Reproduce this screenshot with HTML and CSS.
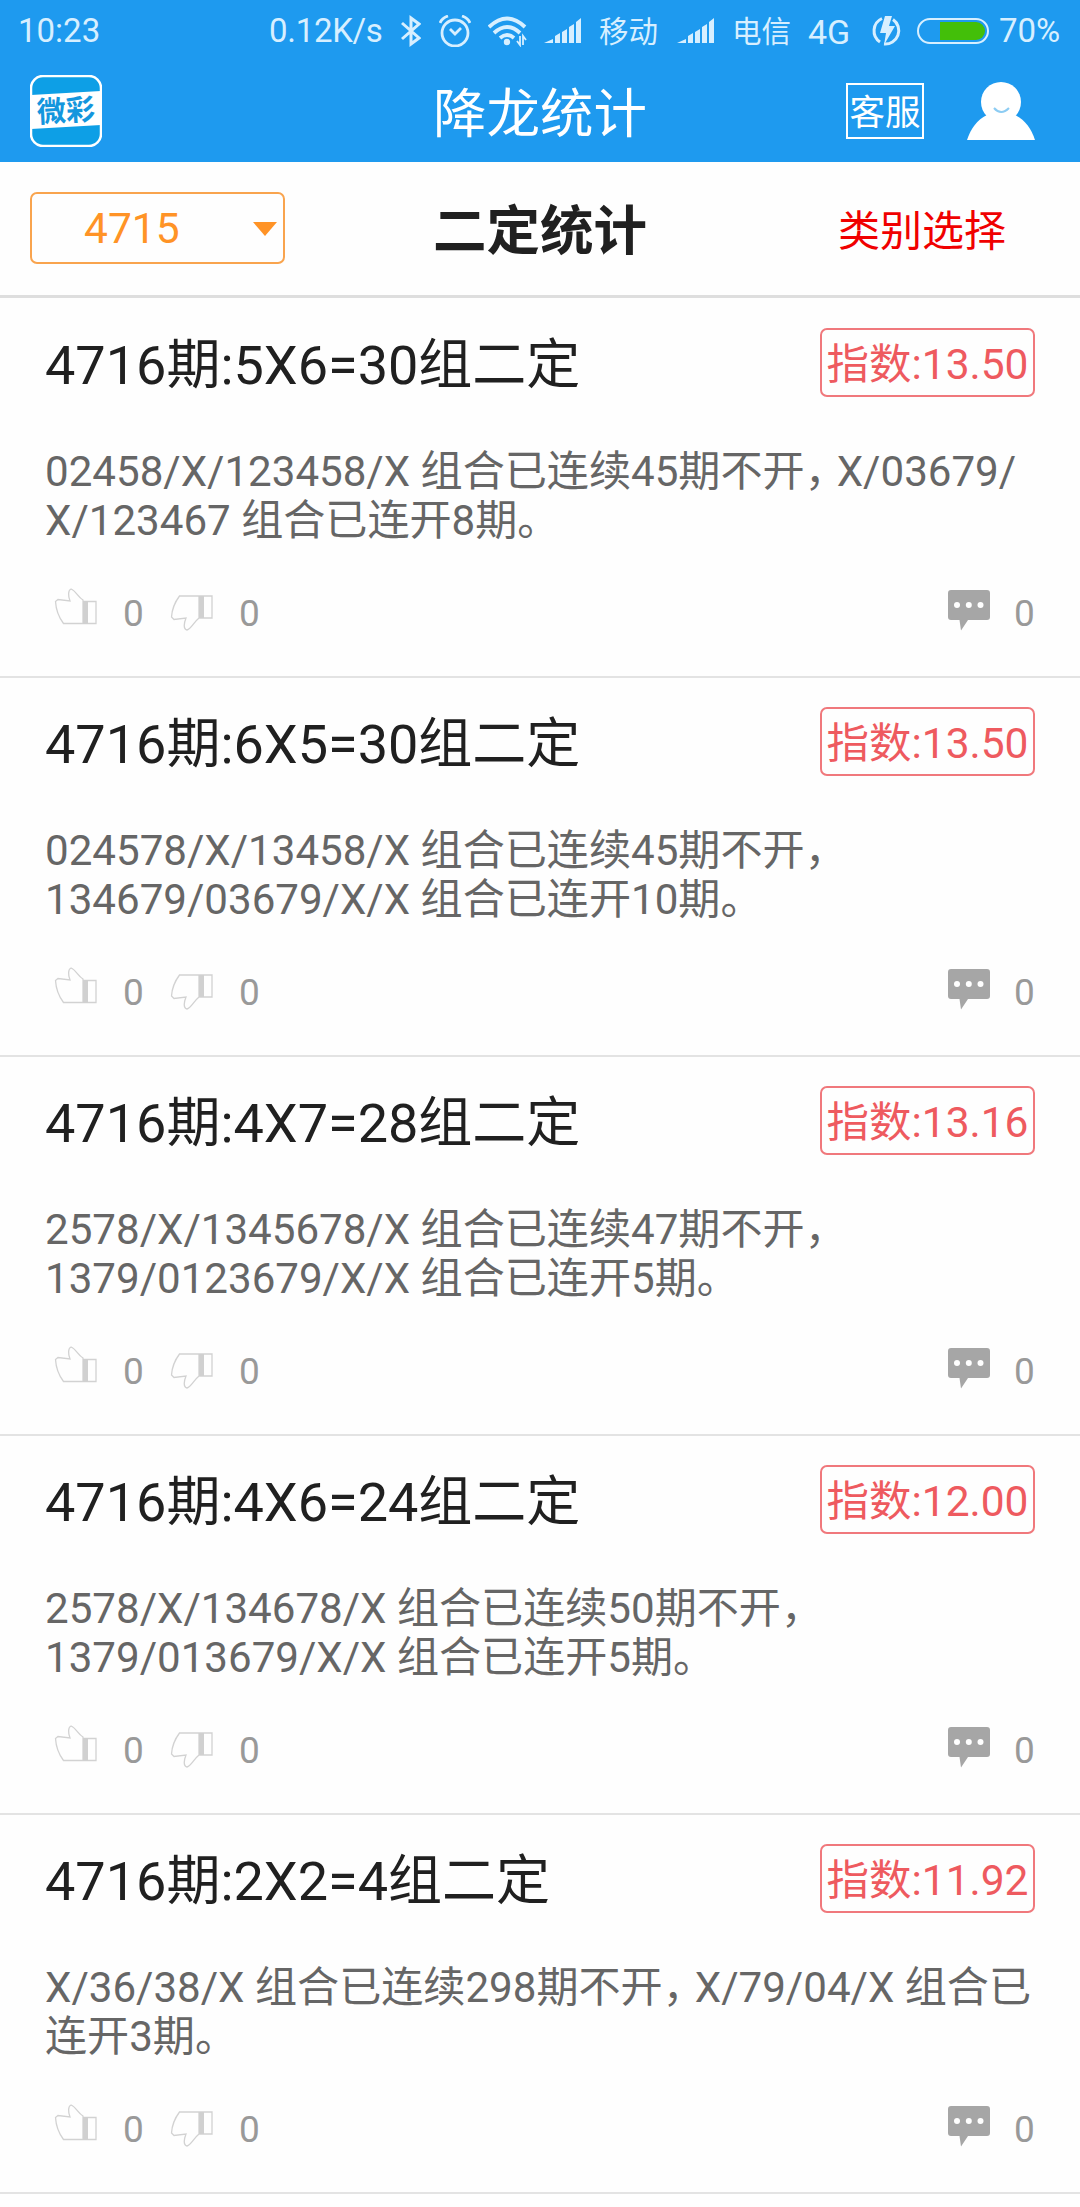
FILE: index.html
```html
<!DOCTYPE html>
<html lang="zh-CN">
<head>
<meta charset="utf-8">
<title>降龙统计</title>
<link rel="stylesheet" href="styles.css">
</head>
<body>
<svg class="defs" width="0" height="0">
  <symbol id="thumb-up" viewBox="0 0 44 38"><path d="M29 13.500H42V35.500H9.500C5 29.500 2 22 1.500 13.500L4 11.500L16 13C14 8 14 2 17 1C22 3 24 9 29 12V35.500" fill="none" stroke="#d2d2d2" stroke-width="1.300"/><path d="M29 13h5v23h-5z" fill="#d0d0d0"/></symbol>
  <symbol id="thumb-down" viewBox="0 0 44 38"><path d="M29 2H42V24H29C24 28 21 35 17 36C13 35 14 29 16 24L4 25.500L1.500 23C2 15 5 8 9.500 2H29V24" fill="none" stroke="#d2d2d2" stroke-width="1.300"/><path d="M29 2h5v22h-5z" fill="#d0d0d0"/></symbol>
  <symbol id="comment" viewBox="0 0 42 41"><path d="M3 0H39Q42 0 42 3V27Q42 30 39 30H20L13 40.500L11.500 30H3Q0 30 0 27V3Q0 0 3 0Z" fill="#a6a6a6"/><circle cx="9" cy="15" r="3" fill="#fff"/><circle cx="20.800" cy="15" r="3" fill="#fff"/><circle cx="32.500" cy="15" r="3" fill="#fff"/></symbol>
  <symbol id="signal" viewBox="0 0 38 26"><path d="M0 25L9 21V25ZM11 18L16 15V25H11ZM18 14L23 11V25H18ZM25 9L30 6V25H25ZM32 4L37 0V25H32Z" fill="#d7efff"/></symbol>
</svg>
<header class="top">
  <div class="status">
    <span class="time">10:23</span>
    <span class="speed">0.12K/s</span>
    <svg class="bt" viewBox="0 0 20 32"><path d="M1 8L18 23L10 29V3L18 9L1 24" fill="none" stroke="#d7efff" stroke-width="3"/></svg>
    <svg class="alarm" viewBox="0 0 32 32"><g fill="none" stroke="#d7efff" stroke-width="2.800"><circle cx="16" cy="18" r="13"/><path d="M11 14L16 19L22 13M1 8Q3 3 9 1M31 8Q29 3 23 1"/></g></svg>
    <svg class="wifi" viewBox="0 0 40 32"><g fill="none" stroke="#d7efff" stroke-width="3.800"><path d="M1 12Q19 -5 37 12M6 18Q19 6 32 18M12 23Q19 17 26 23"/></g><circle cx="19" cy="27" r="3.200" fill="#d7efff"/><path d="M32 21V30L29 26M35 30V21L38 25" fill="none" stroke="#d7efff" stroke-width="1.800"/></svg>
    <svg class="sig sig-a"><use href="#signal"/></svg>
    <span class="carrier-a">移动</span>
    <svg class="sig sig-b"><use href="#signal"/></svg>
    <span class="carrier-b">电信</span>
    <span class="net">4G</span>
    <svg class="charge" viewBox="0 0 32 32"><path d="M11 3.500A13.500 13.500 0 0 0 9 27M22 4.500A13.500 13.500 0 0 1 13 29" fill="none" stroke="#d7efff" stroke-width="3"/><path d="M14 1H21L18 11H24L13 30L15 18H9Z" fill="#d7efff"/></svg>
    <span class="battery"><i></i></span>
    <span class="pct">70%</span>
  </div>
  <div class="nav">
    <div class="logo"><svg viewBox="0 0 72 72"><rect x="1" y="1" width="70" height="70" rx="12" fill="#0d9fe6" stroke="#fff" stroke-width="2.500"/><path d="M1 20L71 16V50L1 54Z" fill="#fff"/><text x="36" y="46" text-anchor="middle" transform="rotate(-3 36 36)" class="logo-text">微彩</text></svg></div>
    <h1>降龙统计</h1>
    <span class="service">客服</span>
    <svg class="user" viewBox="0 0 68 58"><circle cx="34" cy="20" r="20" fill="#fff"/><path d="M0 58C4 46 10 38 20 33H48C58 38 64 46 68 58Z" fill="#fff"/><path d="M27 26Q34 34 42 26" fill="none" stroke="#8cccf3" stroke-width="2"/></svg>
  </div>
</header>
<div class="filter">
  <div class="select"><span>4715</span><i></i></div>
  <h2>二定统计</h2>
  <a class="category">类别选择</a>
</div>
<main>
  <article class="card">
    <div class="head"><h3>4716期:5X6=30组二定</h3><span class="index">指数:13.50</span></div>
    <p>02458/X/123458/X 组合已连续45期不开<span class="comma">，</span>X/03679/<br>X/123467 组合已连开8期。</p>
    <div class="actions"><svg class="up"><use href="#thumb-up"/></svg><b>0</b><svg class="down"><use href="#thumb-down"/></svg><b>0</b><svg class="cmt"><use href="#comment"/></svg><b>0</b></div>
  </article>
  <article class="card">
    <div class="head"><h3>4716期:6X5=30组二定</h3><span class="index">指数:13.50</span></div>
    <p>024578/X/13458/X 组合已连续45期不开<span class="comma">，</span><br>134679/03679/X/X 组合已连开10期。</p>
    <div class="actions"><svg class="up"><use href="#thumb-up"/></svg><b>0</b><svg class="down"><use href="#thumb-down"/></svg><b>0</b><svg class="cmt"><use href="#comment"/></svg><b>0</b></div>
  </article>
  <article class="card">
    <div class="head"><h3>4716期:4X7=28组二定</h3><span class="index">指数:13.16</span></div>
    <p>2578/X/1345678/X 组合已连续47期不开<span class="comma">，</span><br>1379/0123679/X/X 组合已连开5期。</p>
    <div class="actions"><svg class="up"><use href="#thumb-up"/></svg><b>0</b><svg class="down"><use href="#thumb-down"/></svg><b>0</b><svg class="cmt"><use href="#comment"/></svg><b>0</b></div>
  </article>
  <article class="card">
    <div class="head"><h3>4716期:4X6=24组二定</h3><span class="index">指数:12.00</span></div>
    <p>2578/X/134678/X 组合已连续50期不开<span class="comma">，</span><br>1379/013679/X/X 组合已连开5期。</p>
    <div class="actions"><svg class="up"><use href="#thumb-up"/></svg><b>0</b><svg class="down"><use href="#thumb-down"/></svg><b>0</b><svg class="cmt"><use href="#comment"/></svg><b>0</b></div>
  </article>
  <article class="card">
    <div class="head"><h3>4716期:2X2=4组二定</h3><span class="index">指数:11.92</span></div>
    <p>X/36/38/X 组合已连续298期不开<span class="comma">，</span>X/79/04/X 组合已<br>连开3期。</p>
    <div class="actions"><svg class="up"><use href="#thumb-up"/></svg><b>0</b><svg class="down"><use href="#thumb-down"/></svg><b>0</b><svg class="cmt"><use href="#comment"/></svg><b>0</b></div>
  </article>
</main>
</body>
</html>
```
FILE: styles.css
```css
* { box-sizing: border-box; margin: 0; padding: 0; }
body { width: 1080px; height: 2207px; overflow: hidden; background: #fefefe; font-family: Roboto, "Noto Sans CJK SC", sans-serif; color: #202020; }
svg { display: block; flex: none; }
span, b, a, h1, h2, h3 { white-space: nowrap; flex: none; }
.defs { position: absolute; }
.top { height: 162px; background: #1e9aef; color: #fff; }
.status { height: 62px; display: flex; align-items: center; padding-left: 18px; font-size: 33px; line-height: 62px; color: #d7efff; }
.time { width: 251px; }
.speed { width: 132px; letter-spacing: -0.3px; }
.bt { width: 20px; height: 32px; }
.alarm { width: 32px; height: 32px; margin-left: 18px; }
.wifi { width: 40px; height: 32px; margin-left: 17px; }
.sig { width: 38px; height: 26px; }
.sig-a { margin-left: 16px; }
.carrier-a, .carrier-b { font-size: 29.500px; width: 59px; padding-top: 2px; }
.carrier-a { margin-left: 17px; }
.sig-b { margin-left: 19px; }
.carrier-b { margin-left: 17px; }
.net { margin-left: 17px; width: 45px; padding-top: 1px; font-size: 34px; }
.charge { width: 32px; height: 32px; margin-left: 18px; }
.battery { width: 72px; height: 26px; border: 2px solid #d7efff; border-radius: 13px; margin-left: 14px; padding: 2px; display: flex; justify-content: flex-end; }
.battery i { width: 45px; background: #43bf09; border-radius: 0 9px 9px 0; }
.pct { margin-left: 10px; }
.nav { height: 100px; display: flex; align-items: center; padding-left: 30px; }
.logo { width: 72px; height: 72px; margin-top: -2px; }
.logo-text { font-size: 29px; font-weight: 700; fill: #1496dd; }
h1 { font-size: 53.500px; font-weight: 400; line-height: 60px; margin-left: 331px; width: 413px; padding-top: 5px; }
.service { width: 78px; height: 56px; border: 2px solid #fff; font-size: 35.500px; line-height: 56px; text-align: center; margin-top: -2px; }
.user { width: 68px; height: 58px; margin: -3px 0 0 43px; }
.filter { height: 136px; display: flex; align-items: center; padding: 0 0 2px 30px; border-bottom: 3px solid #dedede; }
.select { width: 255px; height: 72px; border: 2px solid #f9a44e; border-radius: 7px; color: #ff9326; font-size: 42.500px; display: flex; align-items: center; justify-content: space-between; padding: 2px 6px 0 52px; }
.select i { border: 12px solid transparent; border-top: 14px solid #ff9326; border-bottom: 0; }
h2 { font-size: 53.500px; font-weight: 700; line-height: 60px; margin-left: 148px; width: 405px; padding-top: 8px; }
.category { font-size: 42px; color: #f00000; }
.card { height: 379px; border-bottom: 2px solid #e3e3e3; padding: 29px 45px 0; }
main { padding-top: 1px; }
.head { height: 69px; display: flex; align-items: center; justify-content: space-between; }
h3 { font-size: 54px; font-weight: 400; line-height: 69px; padding-top: 6px; }
.index { width: 215px; height: 69px; border: 2px solid #f0787c; border-radius: 7px; color: #ee5a5f; font-size: 42.500px; line-height: 70px; text-align: center; }
p { height: 98px; margin-top: 50px; font-size: 42.100px; line-height: 49px; color: #666; white-space: nowrap; }
.comma { letter-spacing: -10px; }
.actions { display: flex; align-items: flex-start; margin-top: 43px; padding-left: 9px; }
.actions b { font-size: 37px; font-weight: 400; line-height: 44px; color: #999; width: 21px; margin-top: 4px; }
.up, .down { width: 44px; height: 38px; }
.up + b { margin-left: 25px; }
.down { margin: 6px 25px 0 26px; }
.cmt { width: 42px; height: 41px; margin: 2px 24px 0 auto; }
```
